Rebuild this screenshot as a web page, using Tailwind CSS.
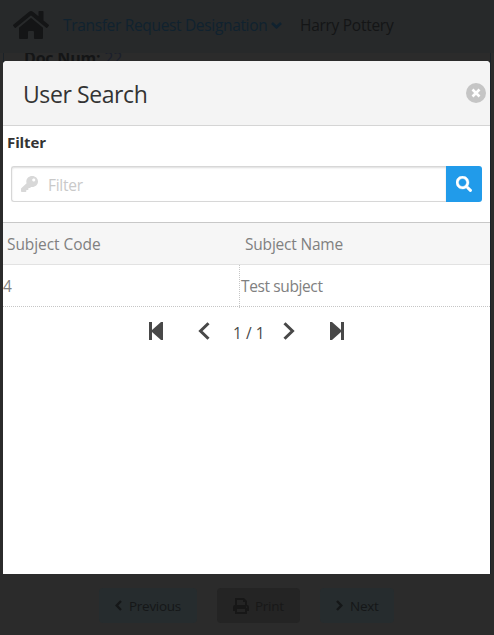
<!DOCTYPE html>
<html lang="en">
<head>
<meta charset="utf-8">
<title>User Search</title>
<script src="https://cdn.jsdelivr.net/npm/@tailwindcss/browser@4"></script>
</head>
<body class="h-[635px] w-[494px] overflow-hidden bg-[#2b2b2b] font-['Open_Sans','Noto_Sans',sans-serif] text-[15.5px] tracking-[-0.28px]">
<div class="relative flex h-[635px] flex-col">
  <header class="flex h-[53px] shrink-0 items-center bg-[#27292a] pl-[13px] text-[#141516]">
    <svg class="-mt-1 h-8 w-9 shrink-0" viewBox="0 0 576 512" fill="currentColor"><path d="M280.37 148.26L96 300.11V464a16 16 0 0 0 16 16l112.06-.29a16 16 0 0 0 15.92-16V368a16 16 0 0 1 16-16h64a16 16 0 0 1 16 16v95.64a16 16 0 0 0 16 16.05L464 480a16 16 0 0 0 16-16V300L295.67 148.26a12.19 12.19 0 0 0-15.3 0zM571.6 251.47L488 182.56V44.05a12 12 0 0 0-12-12h-56a12 12 0 0 0-12 12v72.61L318.47 43a48 48 0 0 0-61 0L4.34 251.47a12 12 0 0 0-1.6 16.9l25.5 31A12 12 0 0 0 45.15 301l235.22-193.74a12.19 12.19 0 0 1 15.3 0L530.9 301a12 12 0 0 0 16.9-1.6l25.5-31a12 12 0 0 0-1.7-16.93z"/></svg>
    <a class="-mt-px ml-[14px] flex w-[219px] items-center whitespace-nowrap text-[#10222f]"><span class="w-[208px] tracking-[-0.33px]">Transfer Request Designation</span>
      <svg class="-mt-px h-[7px] w-[11px] shrink-0" viewBox="0 0 11 7" fill="none" stroke="currentColor" stroke-width="2.6"><path d="M1 1l4.5 4.3L10 1"/></svg></a>
    <span class="-mt-px ml-[18px] tracking-[-0.28px] whitespace-nowrap">Harry Pottery</span>
  </header>
  <main class="mx-[3px] flex h-[521px] shrink-0 items-start overflow-hidden border-x border-[#1b2228] pl-5 leading-5 text-[#141516]">
    <span class="-mt-[7px] text-base tracking-[-0.2px]"><b>Doc Num:</b> <span class="text-[#1b1f2b]">22</span></span>
  </main>
  <footer class="flex h-[61px] justify-start gap-5 pt-[14px] pl-[99px] text-[13.5px] text-[#151718]">
    <button class="flex h-[35px] w-[98px] items-center rounded bg-[#262c2e] pl-4"><svg class="mr-[7px] h-[11px] w-[7px]" viewBox="0 0 7 11" fill="none" stroke="currentColor" stroke-width="2.4"><path d="M6 1L1.7 5.5 6 10"/></svg><span class="pt-0.5">Previous</span></button>
    <button class="flex h-[35px] w-[83px] items-center rounded bg-[#242424] pl-4 text-[#171717]"><svg class="mr-[6px] h-4 w-4" viewBox="0 0 16 16"><path fill="currentColor" fill-rule="evenodd" d="M2 0h9l3 3v4a2 2 0 0 1 2 2v4h-2v3H2v-3H0V9a2 2 0 0 1 2-2zM4 2v5h8V4h-2V2zM4 11v3h8v-3zM13 8.5v1.2h1.2V8.5z"/></svg><span class="pt-0.5 text-[#181818]">Print</span></button>
    <button class="flex h-[35px] w-[74px] items-center rounded bg-[#262c2e] pl-4"><svg class="mr-[7px] h-[11px] w-[7px]" viewBox="0 0 7 11" fill="none" stroke="currentColor" stroke-width="2.4"><path d="M1 1l4.3 4.5L1 10"/></svg><span class="pt-0.5">Next</span></button>
  </footer>

  <!-- Dialog -->
  <section class="absolute top-[61px] left-[3px] flex h-[513px] w-[487px] flex-col overflow-hidden rounded-t-[4px] bg-white text-[#808080]">
    <div class="flex h-[65px] shrink-0 items-center justify-between border-b border-[#d5d5d5] bg-[#f4f4f4] pr-[4px] pl-5">
      <h1 class="pt-[3px] text-[23px] tracking-[-0.4px] text-[#333]">User Search</h1>
      <button aria-label="Close"><svg class="h-5 w-5" viewBox="0 0 20 20"><circle cx="10" cy="10" r="10" fill="#c5c5c5"/><path d="M6.5 6.5l7 7m0-7l-7 7" stroke="#fff" stroke-width="2.6"/></svg></button>
    </div>
    <label class="h-[40px] shrink-0 pt-[6px] pl-[4px] text-[15px] leading-5 font-bold tracking-[-0.1px] text-[#333]">Filter</label>
    <div class="mr-2 mb-[20px] ml-2 flex h-9 shrink-0">
      <div class="flex flex-1 items-center rounded-l-[3px] border border-r-0 border-[#d7d7d7] pl-[9px] text-[#c9c9c9] shadow-[inset_0_1px_2px_#ddd]">
        <svg class="h-4 w-[17px] shrink-0 text-[#d8d8d8]" viewBox="0 0 512 512" preserveAspectRatio="none" fill="currentColor"><path d="M512 176.001C512 273.203 433.202 352 336 352c-11.22 0-22.19-1.062-32.827-3.069l-24.012 27.014A23.999 23.999 0 0 1 261.223 384H224v40c0 13.255-10.745 24-24 24h-40v40c0 13.255-10.745 24-24 24H24c-13.255 0-24-10.745-24-24v-78.059c0-6.365 2.529-12.47 7.029-16.971l161.802-161.802C163.108 213.814 160 195.271 160 176 160 78.798 238.797.001 335.999 0 433.488-.001 512 78.511 512 176.001zM336 128c0 26.51 21.49 48 48 48s48-21.49 48-48-21.49-48-48-48-48 21.49-48 48z"/></svg>
        <span class="ml-[10px] pt-[3px]">Filter</span>
      </div>
      <button aria-label="Search" class="flex w-9 items-center justify-center rounded-r-[3px] bg-[#219bea]"><svg class="h-4 w-4" viewBox="0 0 512 512" fill="#fff" stroke="#fff" stroke-width="12"><path d="M505 442.7L405.3 343c-4.500-4.500-10.600-7-17-7H372c27.600-35.300 44-79.700 44-128C416 93.100 322.900 0 208 0S0 93.100 0 208s93.100 208 208 208c48.300 0 92.700-16.400 128-44v16.300c0 6.400 2.500 12.500 7 17l99.700 99.700c9.400 9.400 24.600 9.400 33.900 0l28.300-28.300c9.400-9.400 9.400-24.600.1-34zM208 336c-70.700 0-128-57.200-128-128 0-70.700 57.200-128 128-128 70.700 0 128 57.200 128 128 0 70.700-57.200 128-128 128z"/></svg></button>
    </div>
    <div class="grid h-[43px] shrink-0 grid-cols-[237px_1fr] items-center border-y border-t-[#c8c8c8] border-b-[#e2e2e2] bg-[#f6f6f6] pt-[3px]">
      <span class="pl-1 tracking-[-0.07px]">Subject Code</span><span class="pl-[5px] tracking-[-0.2px]">Subject Name</span>
    </div>
    <div class="grid h-[42px] shrink-0 grid-cols-[237px_1fr] border-b border-dotted border-[#c6c6c6] leading-[43px]">
      <span class="border-r border-dotted border-[#c6c6c6]">4</span><span class="pl-px tracking-[-0.38px]">Test subject</span>
    </div>
    <nav class="flex h-12 items-center text-[#484848]">
      <svg class="ml-[146px] h-[18px] w-[14px]" viewBox="0 0 14 18" fill="currentColor"><path d="M0 0h3v8L12 0h2v18h-2L3 10v8H0z"/></svg>
      <svg class="ml-[35px] h-[18px] w-[12px]" viewBox="0 0 12 18" fill="none" stroke="currentColor" stroke-width="3"><path d="M10.500 1.200L2.500 9l8 7.800"/></svg>
      <span class="mt-[6px] ml-[23px] w-[33px] tracking-[0.05px] whitespace-nowrap">1 / 1</span>
      <svg class="ml-[17px] h-[18px] w-[12px]" viewBox="0 0 12 18" fill="none" stroke="currentColor" stroke-width="3"><path d="M1.500 1.200L9.500 9l-8 7.800"/></svg>
      <svg class="ml-[35px] h-[18px] w-[14px]" viewBox="0 0 14 18" fill="currentColor"><path d="M14 0h-3v8L2 0H0v18h2l9-8v8h3z"/></svg>
    </nav>
  </section>
</div>
</body>
</html>
